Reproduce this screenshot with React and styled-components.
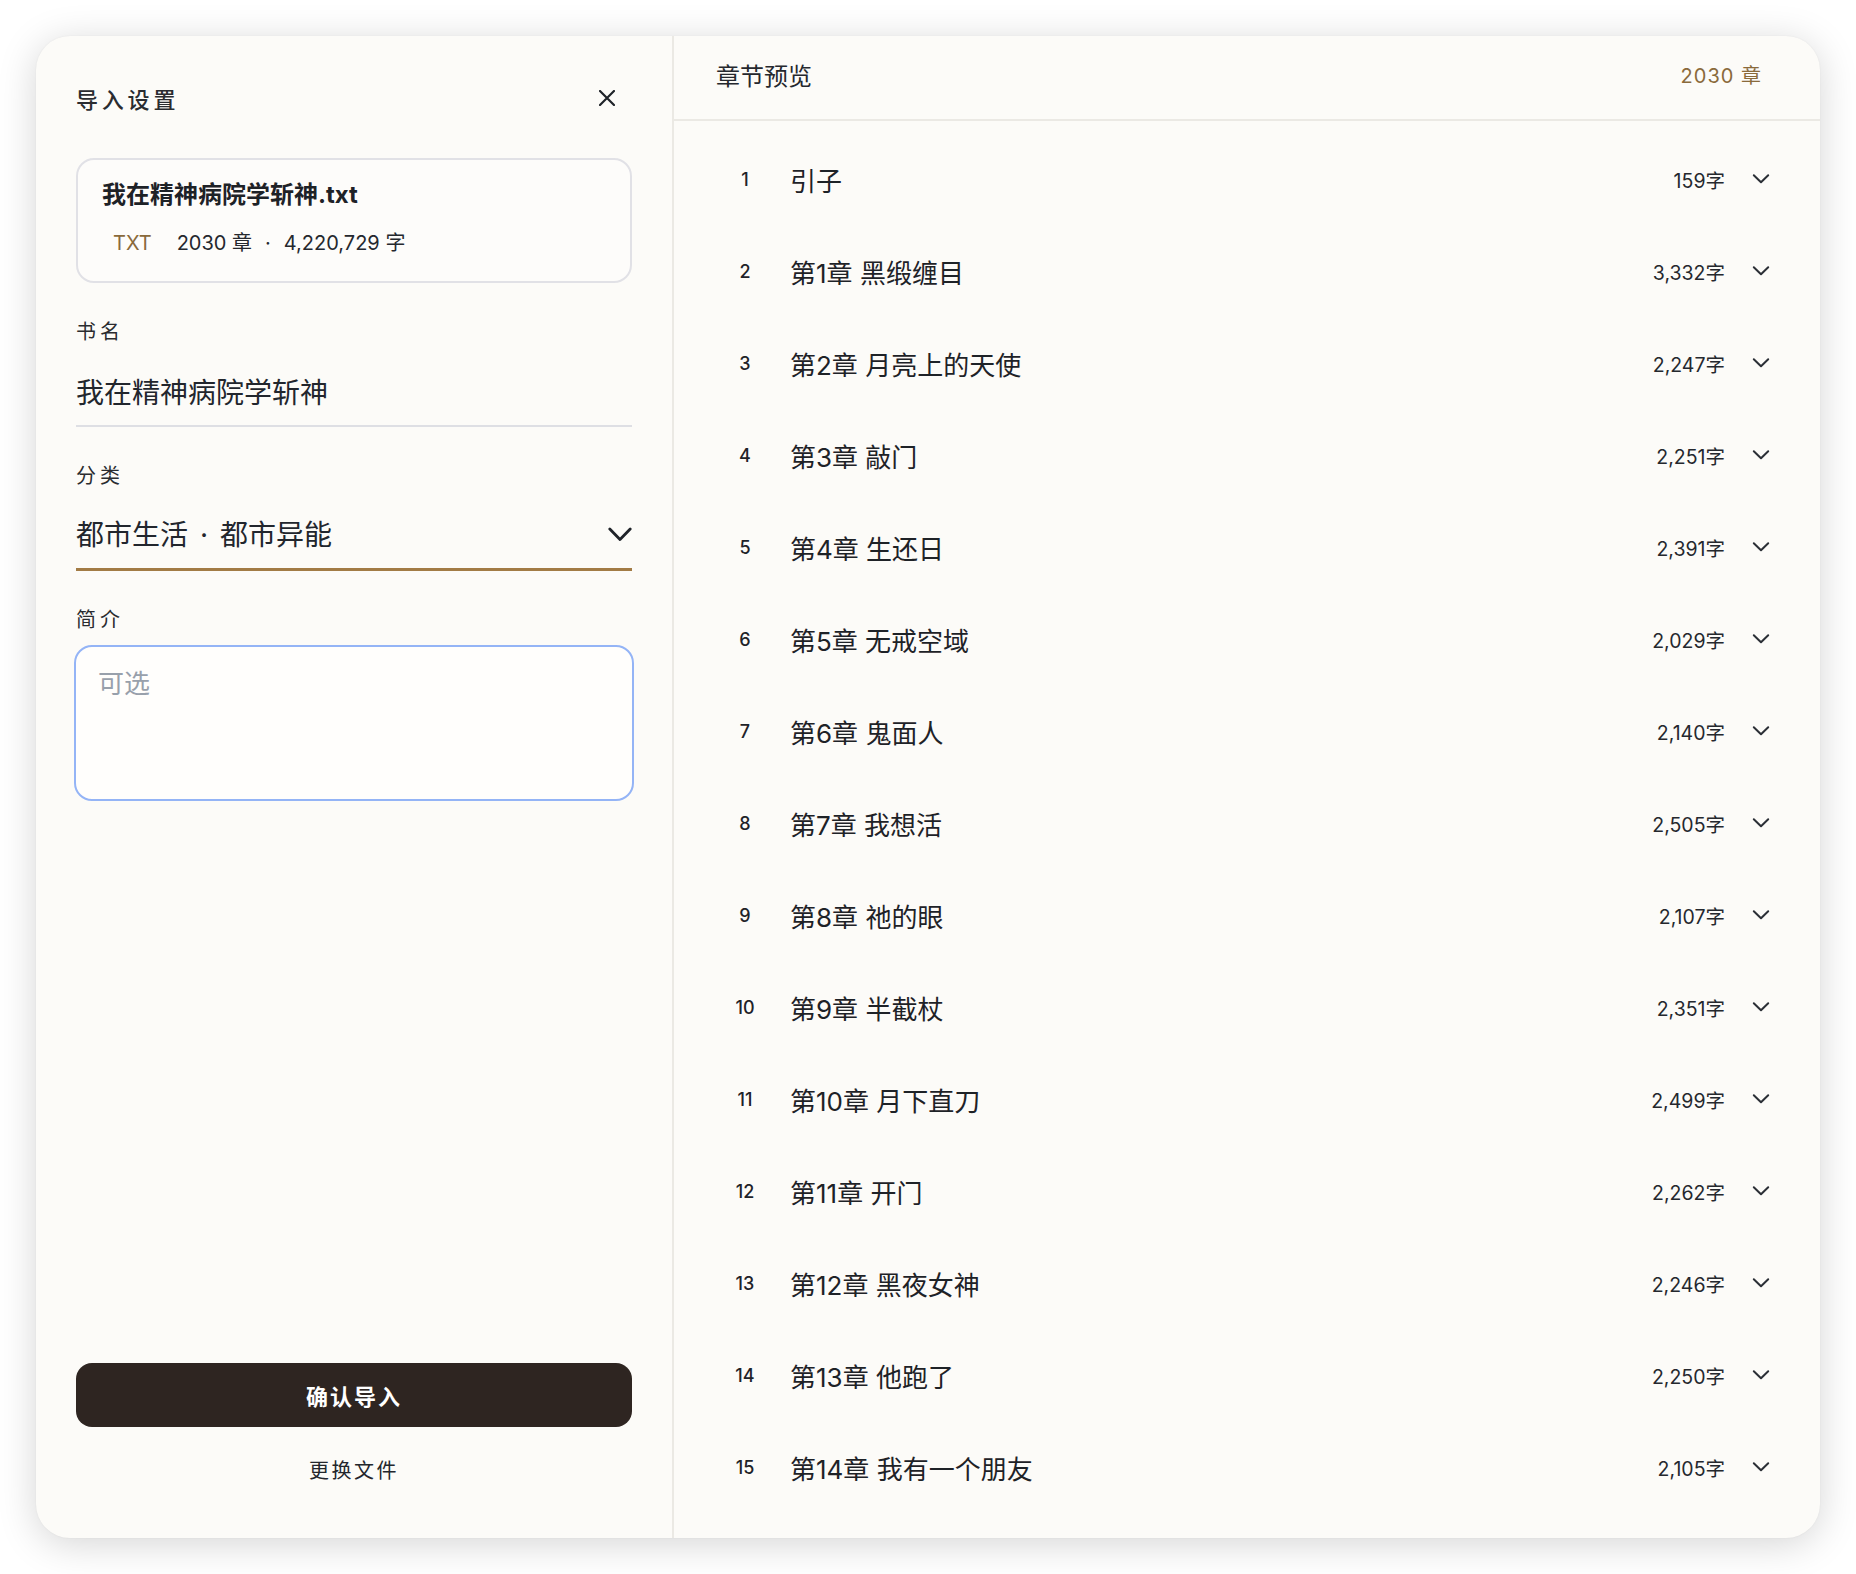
import React from "react";
import styled, { createGlobalStyle } from "styled-components";

const GlobalStyle = createGlobalStyle`
  * { box-sizing: border-box; }
  html, body { margin: 0; padding: 0; background: #ffffff; }
  body {
    font-family: "Inter", "Noto Sans CJK SC", "Noto Sans", sans-serif;
    color: #22262d;
    -webkit-font-smoothing: antialiased;
  }
`;

const Page = styled.div`
  height: 100vh;
  padding: 36px;
  background: #ffffff;
`;

const Card = styled.div`
  height: 100%;
  display: grid;
  grid-template-columns: 638px 1fr;
  background: #fcfbf8;
  border-radius: 34px;
  overflow: hidden;
  box-shadow: 0 6px 38px rgba(0, 0, 0, 0.17), 0 0 2px rgba(0, 0, 0, 0.06);
`;

const LeftPanel = styled.section`
  display: flex;
  flex-direction: column;
  padding: 42px 40px 53px 40px;
  border-right: 2px solid #ebe9e4;
  min-height: 0;
`;

const PanelHeader = styled.div`
  height: 40px;
  display: flex;
  align-items: center;
  justify-content: space-between;
`;

const PanelTitle = styled.h2`
  margin: 0;
  font-size: 22px;
  font-weight: 500;
  letter-spacing: 3.8px;
  color: #2a2c30;
`;

const CloseButton = styled.button`
  width: 34px;
  height: 34px;
  margin-right: 8px;
  border: none;
  background: transparent;
  padding: 0;
  display: flex;
  align-items: center;
  justify-content: center;
  color: #1f2329;
  cursor: pointer;
`;

const FileCard = styled.div`
  margin-top: 40px;
  border: 2px solid #e1e1e6;
  border-radius: 18px;
  padding: 19px 24px 24px 24px;
  background: #fdfcfa;
`;

const FileName = styled.div`
  font-size: 24px;
  line-height: 32px;
  font-weight: 700;
  color: #1e2227;
`;

const FileMeta = styled.div`
  margin-top: 18px;
  display: flex;
  align-items: center;
  font-size: 20px;
  line-height: 28px;
  color: #25282e;
`;

const TypeTag = styled.span`
  padding: 0 11px;
  color: #8a6a3b;
  margin-right: 14px;
`;

const Dot = styled.span`
  margin: 0 ${(p) => p.$gap || 13}px;
`;

const Field = styled.div`
  margin-top: 35px;
  display: flex;
  flex-direction: column;
`;

const Label = styled.label`
  font-size: 20px;
  line-height: 28px;
  letter-spacing: 4px;
  color: #2a2c30;
  margin-bottom: 11.5px;
`;

const TextInput = styled.input`
  font-family: inherit;
  font-size: 28px;
  line-height: 40px;
  height: 69px;
  padding: 13.5px 0 13.5px 0;
  border: none;
  border-bottom: 2px solid #dedfe4;
  background: transparent;
  color: #22262d;
  outline: none;
`;

const SelectBox = styled.div`
  display: flex;
  align-items: center;
  justify-content: space-between;
  padding: 13.5px 0 13px 0;
  border-bottom: 3.5px solid ${(p) => (p.$active ? "#a27b45" : "#dedfe4")};
  font-size: 28px;
  line-height: 40px;
  color: #22262d;
  cursor: pointer;
`;

const SelectValue = styled.span`
  display: flex;
  align-items: center;
`;

const TextArea = styled.textarea`
  font-family: inherit;
  font-size: 26px;
  line-height: 38px;
  height: 156px;
  margin: 0 -2px;
  padding: 18px 22px;
  border: 2px solid #94b4f6;
  border-radius: 18px;
  background: #fffefc;
  color: #22262d;
  resize: none;
  outline: none;
  &::placeholder {
    color: #98a0ab;
  }
`;

const Footer = styled.div`
  margin-top: auto;
  display: flex;
  flex-direction: column;
  align-items: stretch;
`;

const PrimaryButton = styled.button`
  height: 64px;
  border: none;
  border-radius: 16px;
  background: #2e2521;
  color: #ffffff;
  font-family: inherit;
  font-size: 22px;
  font-weight: 600;
  letter-spacing: 2px;
  cursor: pointer;
`;

const LinkButton = styled.button`
  margin-top: 30px;
  align-self: center;
  border: none;
  background: transparent;
  padding: 0;
  font-family: inherit;
  font-size: 20px;
  line-height: 28px;
  letter-spacing: 2.5px;
  color: #23262c;
  cursor: pointer;
`;

const RightPanel = styled.section`
  display: flex;
  flex-direction: column;
  min-height: 0;
`;

const PreviewHeader = styled.header`
  height: 85px;
  flex-shrink: 0;
  display: flex;
  align-items: center;
  justify-content: space-between;
  padding: 0 58px 6px 42px;
  border-bottom: 2px solid #ebe9e4;
`;

const PreviewTitle = styled.h2`
  margin: 0;
  font-size: 24px;
  font-weight: 400;
  color: #25282e;
`;

const ChapterTotal = styled.span`
  font-size: 20px;
  letter-spacing: 1px;
  color: #8a6a3b;
`;

const ChapterList = styled.ul`
  list-style: none;
  margin: 0;
  padding: 12px 0 0 0;
  flex: 1;
  overflow: hidden;
`;

const ChapterRow = styled.li`
  height: 92px;
  display: flex;
  align-items: center;
  padding: 0 47px 0 42px;
`;

const ChapterNum = styled.span`
  width: 58px;
  text-align: center;
  font-size: 18px;
  font-weight: 500;
  color: #1f2329;
`;

const ChapterTitle = styled.span`
  flex: 1;
  margin-left: 16px;
  font-size: 26px;
  color: #1e2227;
`;

const ChapterCount = styled.span`
  font-size: 19.5px;
  color: #25282e;
`;

const ExpandIcon = styled.span`
  width: 24px;
  height: 24px;
  margin-left: 24px;
  display: flex;
  align-items: center;
  justify-content: center;
  color: #2b2f36;
`;

const chapters = [
  ["引子", "159字"],
  ["第1章 黑缎缠目", "3,332字"],
  ["第2章 月亮上的天使", "2,247字"],
  ["第3章 敲门", "2,251字"],
  ["第4章 生还日", "2,391字"],
  ["第5章 无戒空域", "2,029字"],
  ["第6章 鬼面人", "2,140字"],
  ["第7章 我想活", "2,505字"],
  ["第8章 祂的眼", "2,107字"],
  ["第9章 半截杖", "2,351字"],
  ["第10章 月下直刀", "2,499字"],
  ["第11章 开门", "2,262字"],
  ["第12章 黑夜女神", "2,246字"],
  ["第13章 他跑了", "2,250字"],
  ["第14章 我有一个朋友", "2,105字"],
];

const CloseIcon = () => (
  <svg width="16" height="16" viewBox="0 0 16 16" fill="none">
    <path d="M1 1 L15 15 M15 1 L1 15" stroke="currentColor" strokeWidth="2.2" strokeLinecap="round" />
  </svg>
);

const SelectChevron = () => (
  <svg width="24" height="15" viewBox="0 0 24 15" fill="none">
    <polyline points="1.8,2 12,12.5 22.2,2" stroke="#1f2329" strokeWidth="2.8" strokeLinecap="round" strokeLinejoin="round" />
  </svg>
);

const RowChevron = () => (
  <svg width="18" height="12" viewBox="0 0 18 12" fill="none">
    <polyline points="1.8,2.2 9,9.2 16.2,2.2" stroke="currentColor" strokeWidth="2" strokeLinecap="round" strokeLinejoin="round" />
  </svg>
);

export default function App() {
  return (
    <>
      <GlobalStyle />
      <Page>
        <Card>
          <LeftPanel>
            <PanelHeader>
              <PanelTitle>导入设置</PanelTitle>
              <CloseButton aria-label="关闭">
                <CloseIcon />
              </CloseButton>
            </PanelHeader>

            <FileCard>
              <FileName>我在精神病院学斩神.txt</FileName>
              <FileMeta>
                <TypeTag>TXT</TypeTag>
                <span>2030 章</span>
                <Dot>·</Dot>
                <span>4,220,729 字</span>
              </FileMeta>
            </FileCard>

            <Field>
              <Label>书名</Label>
              <TextInput defaultValue="我在精神病院学斩神" />
            </Field>

            <Field>
              <Label>分类</Label>
              <SelectBox $active>
                <SelectValue>
                  都市生活<Dot $gap={12}>·</Dot>都市异能
                </SelectValue>
                <SelectChevron />
              </SelectBox>
            </Field>

            <Field>
              <Label>简介</Label>
              <TextArea placeholder="可选" />
            </Field>

            <Footer>
              <PrimaryButton>确认导入</PrimaryButton>
              <LinkButton>更换文件</LinkButton>
            </Footer>
          </LeftPanel>

          <RightPanel>
            <PreviewHeader>
              <PreviewTitle>章节预览</PreviewTitle>
              <ChapterTotal>2030 章</ChapterTotal>
            </PreviewHeader>
            <ChapterList>
              {chapters.map(([title, count], i) => (
                <ChapterRow key={i}>
                  <ChapterNum>{i + 1}</ChapterNum>
                  <ChapterTitle>{title}</ChapterTitle>
                  <ChapterCount>{count}</ChapterCount>
                  <ExpandIcon>
                    <RowChevron />
                  </ExpandIcon>
                </ChapterRow>
              ))}
            </ChapterList>
          </RightPanel>
        </Card>
      </Page>
    </>
  );
}
